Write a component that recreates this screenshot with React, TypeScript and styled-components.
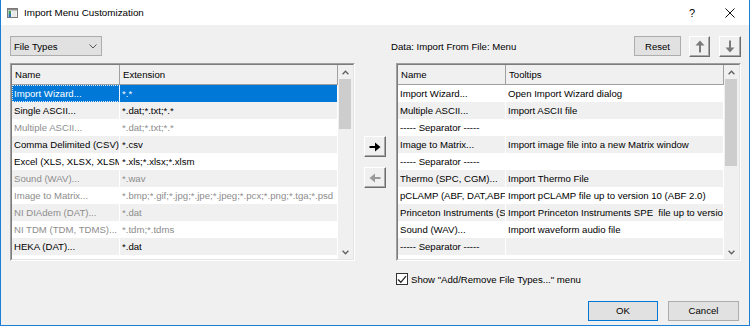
import React from 'react';
import styled, { createGlobalStyle } from 'styled-components';

type Column = { title: string; width: number };
type Row = { cells: string[]; disabled?: boolean; selected?: boolean };

const LEFT_COLUMNS: Column[] = [
  { title: 'Name', width: 108 },
  { title: 'Extension', width: 218 },
];

const RIGHT_COLUMNS: Column[] = [
  { title: 'Name', width: 108 },
  { title: 'Tooltips', width: 218 },
];

const LEFT_ROWS: Row[] = [
  { cells: ['Import Wizard...', '*.*'], selected: true },
  { cells: ['Single ASCII...', '*.dat;*.txt;*.*'] },
  { cells: ['Multiple ASCII...', '*.dat;*.txt;*.*'], disabled: true },
  { cells: ['Comma Delimited (CSV)', '*.csv'] },
  { cells: ['Excel (XLS, XLSX, XLSM)...', '*.xls;*.xlsx;*.xlsm'] },
  { cells: ['Sound (WAV)...', '*.wav'], disabled: true },
  {
    cells: ['Image to Matrix...', '*.bmp;*.gif;*.jpg;*.jpe;*.jpeg;*.pcx;*.png;*.tga;*.psd'],
    disabled: true,
  },
  { cells: ['NI DIAdem (DAT)...', '*.dat'], disabled: true },
  { cells: ['NI TDM (TDM, TDMS)...', '*.tdm;*.tdms'], disabled: true },
  { cells: ['HEKA (DAT)...', '*.dat'] },
  { cells: ['', ''] },
];

const RIGHT_ROWS: Row[] = [
  { cells: ['Import Wizard...', 'Open Import Wizard dialog'] },
  { cells: ['Multiple ASCII...', 'Import ASCII file'] },
  { cells: ['----- Separator -----', ''] },
  { cells: ['Image to Matrix...', 'Import image file into a new Matrix window'] },
  { cells: ['----- Separator -----', ''] },
  { cells: ['Thermo (SPC, CGM)...', 'Import Thermo File'] },
  { cells: ['pCLAMP (ABF, DAT,ABF;ATF)...', 'Import pCLAMP file up to version 10 (ABF 2.0)'] },
  {
    cells: ['Princeton Instruments (SPE)...', 'Import Princeton Instruments SPE  file up to version 3.0'],
  },
  { cells: ['Sound (WAV)...', 'Import waveform audio file'] },
  { cells: ['----- Separator -----', ''] },
  { cells: ['', ''] },
];

const Chevron = ({ up }: { up?: boolean }) => (
  <svg width="7" height="5" viewBox="0 0 7 5">
    <path
      d={up ? 'M0.6 4.2 L3.5 1.2 L6.4 4.2' : 'M0.6 0.8 L3.5 3.8 L6.4 0.8'}
      fill="none"
      stroke="#606060"
      strokeWidth="1.3"
    />
  </svg>
);

const ListView: React.FC<{ columns: Column[]; rows: Row[]; thumb: number }> = props => (
  <ListFrame>
    <ListInner>
      <ListArea>
        <HeaderRow>
          {props.columns.map(c => (
            <HeaderCell key={c.title} $w={c.width}>
              {c.title}
            </HeaderCell>
          ))}
        </HeaderRow>
        {props.rows.map((r, i) => (
          <DataRow key={i} $alt={i % 2 === 1} $selected={!!r.selected} $disabled={!!r.disabled}>
            {r.cells.map((cell, j) => (
              <DataCell key={j} $w={props.columns[j].width} $focus={!!r.selected && j === 0}>
                <CellText>{cell}</CellText>
              </DataCell>
            ))}
          </DataRow>
        ))}
      </ListArea>
      <ScrollBar>
        <ScrollArrow>
          <Chevron up />
        </ScrollArrow>
        <ScrollTrack>
          <Thumb style={{ height: props.thumb }} />
        </ScrollTrack>
        <ScrollArrow>
          <Chevron />
        </ScrollArrow>
      </ScrollBar>
    </ListInner>
  </ListFrame>
);

const HArrow = ({ left, color }: { left?: boolean; color: string }) => (
  <svg width="12" height="10" viewBox="0 0 12 10">
    <g transform={left ? 'translate(12 0) scale(-1 1)' : undefined}>
      <rect x="0.5" y="4" width="7" height="2" fill={color} />
      <polygon points="6,0.5 11.5,5 6,9.5" fill={color} />
    </g>
  </svg>
);

const VArrow = ({ down }: { down?: boolean }) => (
  <svg width="10" height="13" viewBox="0 0 10 13">
    <g transform={down ? 'translate(0 13) scale(1 -1)' : undefined}>
      <rect x="4" y="5" width="2" height="7.5" fill="#7a7a7a" />
      <polygon points="0.5,5.5 5,0.5 9.5,5.5" fill="#7a7a7a" />
    </g>
  </svg>
);

const App: React.FC = () => (
  <>
    <GlobalStyle />
    <Window>
      <TitleBar>
        <AppIcon>
          <svg width="11" height="10" viewBox="0 0 11 10">
            <rect x="0.5" y="0.5" width="10" height="9" fill="#fff" stroke="#7a7a7a" />
            <rect x="1" y="1" width="9" height="1.5" fill="#8a8a8a" />
            <rect x="1.5" y="3" width="2.5" height="3" fill="#3a9a5a" />
            <rect x="1.5" y="6" width="2.5" height="3" fill="#2f6fb8" />
            <rect x="4.5" y="3" width="5" height="6" fill="#e8e8e8" />
          </svg>
        </AppIcon>
        <Title>Import Menu Customization</Title>
        <TitleControls>
          <TitleButton>?</TitleButton>
          <TitleButton>
            <svg width="10" height="10" viewBox="0 0 10 10">
              <path d="M0.5 0.5 L9.5 9.5 M9.5 0.5 L0.5 9.5" stroke="#111" strokeWidth="1" />
            </svg>
          </TitleButton>
        </TitleControls>
      </TitleBar>

      <Body>
        <Toolbar>
          <Select>
            <span>File Types</span>
            <svg width="8" height="5" viewBox="0 0 8 5">
              <path d="M0.5 0.5 L4 4 L7.5 0.5" fill="none" stroke="#555" strokeWidth="1" />
            </svg>
          </Select>
        </Toolbar>
        <div />
        <Toolbar>
          <DataLabel>Data: Import From File: Menu</DataLabel>
          <FlatButton $w={47}>Reset</FlatButton>
          <ClassicButton $w={21} $h={21}>
            <VArrow />
          </ClassicButton>
          <ClassicButton $w={22} $h={21}>
            <VArrow down />
          </ClassicButton>
        </Toolbar>

        <ListView columns={LEFT_COLUMNS} rows={LEFT_ROWS} thumb={50} />
        <MoveButtons>
          <ClassicButton $w={22} $h={21}>
            <HArrow color="#000" />
          </ClassicButton>
          <ClassicButton $w={22} $h={21}>
            <HArrow left color="#9a9a9a" />
          </ClassicButton>
        </MoveButtons>
        <ListView columns={RIGHT_COLUMNS} rows={RIGHT_ROWS} thumb={87} />

        <div />
        <div />
        <CheckRow>
          <CheckBox>
            <svg width="10" height="9" viewBox="0 0 10 9">
              <path d="M1 4.5 L3.8 7.3 L9 1.2" fill="none" stroke="#222" strokeWidth="1.3" />
            </svg>
          </CheckBox>
          <span>Show "Add/Remove File Types..." menu</span>
        </CheckRow>

        <div />
        <div />
        <DialogButtons>
          <FlatButton $w={70} $default>
            OK
          </FlatButton>
          <FlatButton $w={71}>Cancel</FlatButton>
        </DialogButtons>
      </Body>
    </Window>
  </>
);

const GlobalStyle = createGlobalStyle`
  html, body {
    margin: 0;
    padding: 0;
    background: #ffffff;
  }
  body {
    font-family: "Liberation Sans", Arial, sans-serif;
    font-size: 9.6px;
    color: #000000;
  }
  * {
    box-sizing: border-box;
  }
`;

const Window = styled.div`
  display: flex;
  flex-direction: column;
  width: 750px;
  height: 326px;
  border: 1px solid #1c7fd6;
  border-top: none;
  background-color: #f0f0f0;
  overflow: hidden;
`;

const TitleBar = styled.div`
  display: flex;
  align-items: center;
  height: 25px;
  padding-left: 6px;
  background-color: #ffffff;
`;

const AppIcon = styled.div`
  display: flex;
  width: 11px;
  height: 10px;
  margin-right: 6px;
`;

const Title = styled.div`
  font-size: 9.8px;
  color: #000000;
`;

const TitleControls = styled.div`
  display: flex;
  margin-left: auto;
  height: 100%;
`;

const TitleButton = styled.div`
  display: flex;
  align-items: center;
  justify-content: center;
  width: 38px;
  height: 100%;
  font-size: 11px;
`;

const Body = styled.div`
  display: grid;
  flex: 1;
  grid-template-columns: 345px 41px 345px;
  grid-template-rows: 28px 198px auto auto;
  padding: 10px 8px 0 9px;
`;

const Toolbar = styled.div`
  display: flex;
  align-items: center;
  align-self: start;
  height: 22px;
`;

const Select = styled.div`
  display: flex;
  align-items: center;
  justify-content: space-between;
  width: 92px;
  height: 20px;
  padding: 0 4px 0 3px;
  background-color: #e1e1e1;
  border: 1px solid #adadad;
`;

const DataLabel = styled.div`
  flex: 1;
  margin-left: -5px;
`;

const FlatButton = styled.div<{ $w: number; $default?: boolean }>`
  display: flex;
  align-items: center;
  justify-content: center;
  width: ${p => p.$w}px;
  height: 20px;
  background-color: #e1e1e1;
  border: 1px solid ${p => (p.$default ? '#0078d7' : '#adadad')};
  margin-right: 8px;
`;

const ClassicButton = styled.div<{ $w: number; $h: number }>`
  display: flex;
  align-items: center;
  justify-content: center;
  width: ${p => p.$w}px;
  height: ${p => p.$h}px;
  background-color: #f0f0f0;
  border: 1px solid;
  border-color: #ffffff #6e6e6e #6e6e6e #ffffff;
  box-shadow: inset -1px -1px 0 #a8a8a8;
  & + & {
    margin-left: 9px;
  }
`;

const MoveButtons = styled.div`
  display: flex;
  flex-direction: column;
  align-items: center;
  justify-content: center;
  gap: 10px;
  padding-right: 2px;

  ${ClassicButton} + ${ClassicButton} {
    margin-left: 0;
  }
`;

const ListFrame = styled.div`
  height: 198px;
  border: 1px solid;
  border-color: #a0a0a0 #ffffff #ffffff #a0a0a0;
`;

const ListInner = styled.div`
  display: flex;
  height: 100%;
  border: 1px solid;
  border-color: #7c7c7c #e3e3e3 #e3e3e3 #7c7c7c;
  background-color: #ffffff;
  overflow: hidden;
`;

const ListArea = styled.div`
  flex: 1;
  overflow: hidden;
`;

const HeaderRow = styled.div`
  display: flex;
  height: 20px;
  background-color: #f0f0f0;
  border-bottom: 1px solid #a0a0a0;
`;

const HeaderCell = styled.div<{ $w: number }>`
  width: ${p => p.$w}px;
  flex-shrink: 0;
  padding-left: 3px;
  line-height: 19px;
  border-right: 1px solid #a0a0a0;
  white-space: nowrap;
  overflow: hidden;
`;

const DataRow = styled.div<{ $alt: boolean; $selected: boolean; $disabled: boolean }>`
  display: flex;
  height: 17px;
  background-color: ${p => (p.$selected ? '#0078d7' : p.$alt ? '#f0f0f0' : '#ffffff')};
  color: ${p => (p.$selected ? '#ffffff' : p.$disabled ? '#8d8d8d' : '#000000')};
`;

const DataCell = styled.div<{ $w: number; $focus: boolean }>`
  width: ${p => p.$w}px;
  flex-shrink: 0;
  padding-left: 2px;
  line-height: 17px;
  overflow: hidden;
  border-right: 1px solid #ffffff;
  outline: ${p => (p.$focus ? '1px dotted #d8e8ff' : 'none')};
  outline-offset: -1px;
`;

const CellText = styled.span`
  display: block;
  white-space: pre;
  overflow: hidden;
  text-overflow: clip;
`;

const ScrollBar = styled.div`
  display: flex;
  flex-direction: column;
  width: 15px;
  flex-shrink: 0;
  background-color: #f0f0f0;
`;

const ScrollArrow = styled.div`
  display: flex;
  align-items: center;
  justify-content: center;
  height: 14px;
`;

const ScrollTrack = styled.div`
  flex: 1;
  padding: 0 2px 0 1px;
`;

const Thumb = styled.div`
  background-color: #cdcdcd;
`;

const CheckRow = styled.div`
  display: flex;
  align-items: center;
  gap: 3px;
  margin-top: 12px;
  height: 12px;
`;

const CheckBox = styled.div`
  display: flex;
  align-items: center;
  justify-content: center;
  width: 12px;
  height: 12px;
  background-color: #ffffff;
  border: 1px solid #333333;
`;

const DialogButtons = styled.div`
  display: flex;
  justify-content: flex-end;
  margin-top: 11px;
  padding-right: 2px;

  ${FlatButton} {
    margin-right: 0;
  }
  ${FlatButton} + ${FlatButton} {
    margin-left: 10px;
  }
`;

export default App;
